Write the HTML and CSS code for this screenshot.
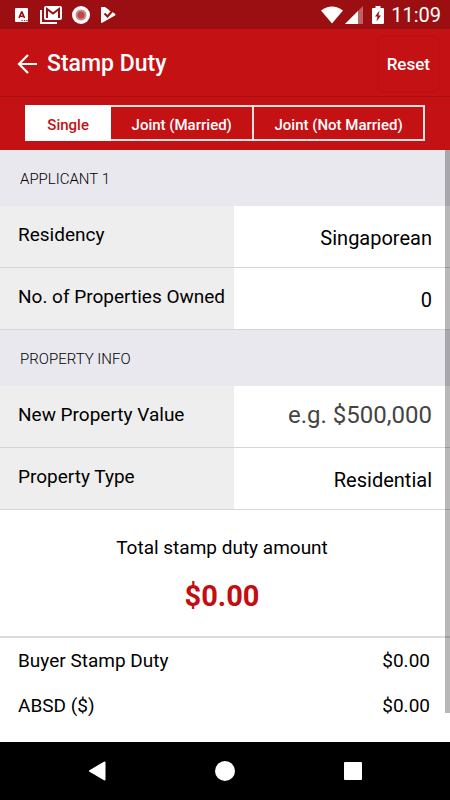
FILE: index.html
```html
<!DOCTYPE html>
<html lang="en">
<head>
    <meta charset="utf-8">
    <meta name="viewport" content="width=device-width, initial-scale=1">
    <title>Stamp Duty</title>
    <link rel="stylesheet" href="styles.css">
</head>
<body>

<div class="statusbar">
    <div class="status-left">
        <svg width="14" height="16" viewBox="0 0 14 16">
            <rect x="1" y="1" width="13" height="14" rx="1" fill="#fff"/>
            <path d="M5 11l2.500-6h.5L10.500 11M5.800 9.300h4" fill="none" stroke="#9b0e11" stroke-width="1.600"/>
            <path d="M7.500 13.500h1.200M10 13.500h1.200M12.300 13.500h1.200" stroke="#9b0e11"/>
        </svg>
        <svg width="22" height="18" viewBox="0 0 22 18">
            <path d="M1 4v13h16" fill="none" stroke="#fff" stroke-width="2"/>
            <rect x="4" y="0" width="18" height="14" rx="2" fill="#fff"/>
            <path d="M7 12V3l6 4.500L19 3v9" fill="none" stroke="#9b0e11" stroke-width="2"/>
        </svg>
        <svg width="18" height="18" viewBox="0 0 18 18">
            <circle cx="9" cy="9" r="9" fill="#fff"/>
            <circle cx="9" cy="9" r="5.500" fill="#d38788"/>
            <circle cx="9" cy="9" r="3.500" fill="#b9484a"/>
        </svg>
        <svg width="17" height="18" viewBox="0 0 17 18">
            <path d="M2 1q-1-.3-1 1v14q0 1.300 1.200.8L15 9.500q1-.8.200-1.600L12.500 6z" fill="#fff"/>
            <path d="M2 1h3l4 3-3 4z" fill="#fff"/>
            <path d="M4.500 7.500l3 3 6.500-7.500" fill="none" stroke="#9b0e11" stroke-width="2"/>
        </svg>
    </div>
    <div class="status-right">
        <svg width="22" height="18" viewBox="0 0 22 18">
            <path d="M0 4.500Q11-3.500 22 4.500L11 17.500z" fill="#fff"/>
        </svg>
        <svg width="18" height="18" viewBox="0 0 18 18">
            <path d="M0 18L18 0v18z" fill="#fff" opacity=".35"/>
            <path d="M0 18L13 5v13z" fill="#fff"/>
        </svg>
        <svg class="battery" width="12" height="18" viewBox="0 0 12 18">
            <path d="M1 2h2.500V0h5v2H11q1 0 1 1v14q0 1-1 1H1q-1 0-1-1V3q0-1 1-1z" fill="#fff"/>
            <path d="M7.500 4.500L3 10.500h2.500L4.500 15.500l4.500-6H6.500z" fill="#9b0e11"/>
        </svg>
        <span class="clock">11:09</span>
    </div>
</div>

<header class="topnav">
    <a href="#back" class="back" aria-label="Back">
        <svg width="20" height="20" viewBox="0 0 20 20">
            <path d="M20 10H2M11 1l-9 9 9 9" fill="none" stroke="#fff" stroke-width="2.200"/>
        </svg>
    </a>
    <h1>Stamp Duty</h1>
    <button type="button" class="reset">Reset</button>
</header>

<div class="tabs">
    <button type="button" class="tab active">Single</button>
    <button type="button" class="tab">Joint (Married)</button>
    <button type="button" class="tab">Joint (Not Married)</button>
</div>

<main class="content">
    <form action="">
        <h2>APPLICANT 1</h2>
        <div class="row">
            <label for="residency">Residency</label>
            <select id="residency" name="residency">
                <option>Singaporean</option>
            </select>
        </div>
        <div class="row">
            <label for="owned">No. of Properties Owned</label>
            <select id="owned" name="owned">
                <option>0</option>
            </select>
        </div>
        <h2>PROPERTY INFO</h2>
        <div class="row">
            <label for="value">New Property Value</label>
            <input type="text" id="value" name="value" placeholder="e.g. $500,000">
        </div>
        <div class="row">
            <label for="type">Property Type</label>
            <select id="type" name="type">
                <option>Residential</option>
            </select>
        </div>
    </form>
    <div class="total">
        <p>Total stamp duty amount</p>
        <strong>$0.00</strong>
    </div>
    <dl class="summary">
        <div class="line">
            <dt>Buyer Stamp Duty</dt>
            <dd>$0.00</dd>
        </div>
        <div class="line">
            <dt>ABSD ($)</dt>
            <dd>$0.00</dd>
        </div>
    </dl>
    <div class="scrollbar"></div>
</main>

<nav class="navbar">
    <button type="button" aria-label="Back">
        <svg width="20" height="20" viewBox="0 0 20 20">
            <path d="M17.500 1.500v17L3 10z" fill="#fff" stroke="#fff" stroke-width="2" stroke-linejoin="round"/>
        </svg>
    </button>
    <button type="button" aria-label="Home">
        <svg width="20" height="20" viewBox="0 0 20 20">
            <circle cx="10" cy="10" r="10" fill="#fff"/>
        </svg>
    </button>
    <button type="button" aria-label="Recent apps">
        <svg width="20" height="20" viewBox="0 0 20 20">
            <rect x="1" y="1" width="18" height="18" rx="1" fill="#fff"/>
        </svg>
    </button>
</nav>

</body>
</html>
```
FILE: styles.css
```css
* {
  box-sizing: border-box;
}

body {
  margin: 0;
  min-height: 100vh;
  display: flex;
  flex-direction: column;
  font-family: Roboto, "Liberation Sans", sans-serif;
  font-size: 19px;
  color: #000;
  background: #fff;
}

h1, h2, p, dl, dd {
  margin: 0;
}

svg {
  display: block;
}

button, input, select {
  font-family: inherit;
  border: none;
  border-radius: 0;
  background: none;
  cursor: pointer;
}

/* Status bar */
.statusbar {
  display: flex;
  justify-content: space-between;
  align-items: center;
  height: 29px;
  padding: 0 9px 0 14px;
  background: #9b0e11;
}

.status-left {
  display: flex;
  align-items: center;
  gap: 10px;
}

.status-left svg:first-child {
  margin-right: 2px;
}

.status-right {
  display: flex;
  align-items: center;
  gap: 2px;
}

.battery {
  margin: 0 5px 0 7px;
}

.clock {
  font-size: 20px;
  line-height: 28px;
  color: #fff;
}

/* Title bar */
.topnav {
  display: flex;
  align-items: center;
  height: 68px;
  padding: 2px 12px 0 17px;
  background: #c41114;
  border-bottom: 1px solid #a80f12;
}

.topnav h1 {
  flex: 1;
  margin-left: 10px;
  font-size: 23px;
  font-weight: 500;
  color: #fff;
}

.reset {
  height: 54px;
  padding: 0 8px;
  font-size: 17px;
  font-weight: 500;
  color: #fff;
  border-radius: 2px;
  box-shadow: 0 0 2px rgba(0, 0, 0, .2);
}

/* Applicant tabs */
.tabs {
  display: flex;
  padding: 8px 25px 9px;
  background: #c41114;
}

.tab {
  flex: 1 1 auto;
  height: 36px;
  padding: 4px 20px 0;
  font-size: 15px;
  font-weight: 500;
  color: #fff;
  border: 2px solid #f6e0e0;
  white-space: nowrap;
}

.tab + .tab {
  border-left: 0;
}

.tab.active {
  color: #c41114;
  background: #fff;
  border-color: #fff;
}

/* Form */
.content {
  position: relative;
  flex: 1;
}

h2 {
  height: 56px;
  padding: 0 20px;
  font-size: 15px;
  line-height: 58px;
  font-weight: 300;
  color: #000;
  background: #e9e8ee;
}

.row {
  display: flex;
  height: 62px;
  border-bottom: 1px solid #d6d6d6;
}

.row label {
  width: 52%;
  padding-left: 18px;
  line-height: 58px;
  white-space: nowrap;
  background: #eee;
}

.row select,
.row input {
  flex: 1;
  min-width: 0;
  padding: 2px 18px 0 0;
  font-size: 20px;
  color: #000;
  text-align: right;
  text-align-last: right;
  appearance: none;
}

.row input {
  padding: 0 18px 4px 0;
  font-size: 24px;
}

.row input::placeholder {
  color: #444;
}

/* Result */
.total {
  padding: 24px 0 22px;
  text-align: center;
  border-bottom: 2px solid #dcdcdf;
}

.total p {
  padding-right: 6px;
  line-height: 28px;
}

.total strong {
  display: block;
  margin-top: 16px;
  padding-right: 6px;
  font-size: 29px;
  line-height: 36px;
  font-weight: 700;
  color: #c30d10;
}

.line {
  display: flex;
  justify-content: space-between;
  padding: 0 20px 0 18px;
  line-height: 45px;
}

.scrollbar {
  position: absolute;
  top: 0;
  right: 0;
  bottom: 29px;
  width: 5px;
  background: rgba(0, 0, 0, .28);
}

/* System navigation */
.navbar {
  display: flex;
  justify-content: center;
  align-items: center;
  gap: 24%;
  height: 58px;
  background: #000;
}

.navbar button {
  padding: 0;
}
```
